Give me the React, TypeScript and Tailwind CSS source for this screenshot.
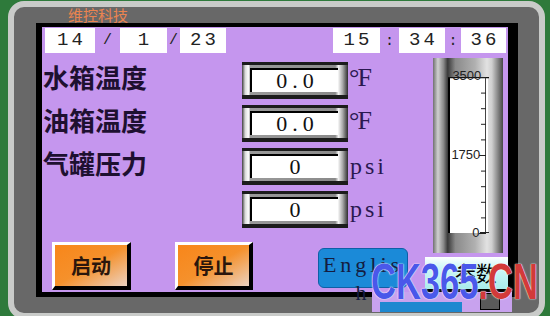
import React from "react";

function DBox({ v, w }: { v: string; w: string }) {
  return (
    <div className={`${w} h-full bg-white flex items-center justify-center pl-[3px] text-[19px] tracking-[3px] text-[#222]`}>{v}</div>
  );
}

function ValBox({ v }: { v: string }) {
  return (
    <div className="w-[106px] h-[37px] border-t-[3px] border-b-[4px] border-[#1c1c1c] bg-[linear-gradient(to_right,#3e3e3e_0%,#d8d8d8_3%,#ffffff_6%,#9a9a9a_8%,#8a8a8a_88%,#f2f2f2_91%,#a8a8a8_95%,#2e2e2e_100%)] pl-[8px] pr-[10px] pt-[3px]">
      <div className="h-[24px] bg-white border-l-2 border-t-2 border-black flex items-center justify-center pl-[5px] text-[22px] leading-none tracking-[5px] text-[#111] font-['Liberation_Serif',serif]">
        {v}
      </div>
    </div>
  );
}

function Row({ label, v, unit }: { label: string; v: string; unit: string }) {
  return (
    <div className="flex h-[37px] items-center">
      <div className="w-[200px] pl-[1px] pb-[8px] text-[26px] leading-none font-bold text-[#1e1030] font-['Noto_Sans_CJK_SC',sans-serif]">
        {label}
      </div>
      <ValBox v={v} />
      {unit === "F" ? (
        <div className="ml-[1px] pb-[6px] text-[26px] leading-none tracking-[-2px] text-[#2a1850] font-['Liberation_Serif',serif]">°F</div>
      ) : (
        <div className="ml-[2px] pb-[2px] text-[24px] leading-none tracking-[3px] text-[#2a1850] font-['Liberation_Serif',serif]">psi</div>
      )}
    </div>
  );
}

function OrangeBtn({ t, w }: { t: string; w: string }) {
  return (
    <div
      className={`${w} h-[48px] border-t-[3px] border-l-[3px] border-t-white border-l-white border-b-[4px] border-r-[4px] border-b-black border-r-black bg-[linear-gradient(150deg,#f8861a_0%,#f5912c_50%,#ecd2c0_100%)] flex items-center justify-center text-[20px] font-bold text-[#2b160c] font-['Noto_Sans_CJK_SC',sans-serif]`}
    >
      {t}
    </div>
  );
}

export default function App() {
  const ticks = Array.from({ length: 11 }, (_, i) => i * 15.6);
  return (
    <div className="relative w-[550px] h-[316px] overflow-hidden bg-[#2e7a3b] pl-[8px] pr-[5px] pt-[1px]">
      <div className="h-[318px] rounded-[16px] border-[6px] border-[#c9cbc9] bg-[#686868] pl-[22px] pr-[21px] pb-[15px] flex flex-col">
        <div className="h-[16px] pl-[32px] text-[15px] leading-[16px] text-[#eb8450] font-['Noto_Sans_CJK_SC',sans-serif]">
          维控科技
        </div>
        <div className="h-[274px] border-l-[6px] border-t-[4px] border-r-[10px] border-b-[5px] border-black bg-[#c596ee] flex flex-col">
          {/* date / time row */}
          <div className="mt-[1px] h-[25px] flex items-stretch pl-[3px] pr-[2px] font-['Liberation_Mono',monospace]">
            <DBox v="14" w="w-[50px]" />
            <div className="w-[25px] flex items-center justify-center pt-[2px] text-[15px] text-[#222]">/</div>
            <DBox v="1" w="w-[47px]" />
            <div className="w-[13px] flex items-center justify-center pt-[2px] text-[15px] text-[#222]">/</div>
            <DBox v="23" w="w-[46px]" />
            <div className="ml-auto" />
            <DBox v="15" w="w-[47px]" />
            <div className="w-[19px] flex items-center justify-center pt-[4px] text-[15px] text-[#222]">:</div>
            <DBox v="34" w="w-[46px]" />
            <div className="w-[16px] flex items-center justify-center pt-[4px] text-[15px] text-[#222]">:</div>
            <DBox v="36" w="w-[45px]" />
          </div>

          <div className="flex flex-1">
            {/* left column */}
            <div className="w-[385px] flex flex-col">
              <div className="mt-[9px] flex flex-col gap-[6px]">
                <Row label="水箱温度" v="0.0" unit="F" />
                <Row label="油箱温度" v="0.0" unit="F" />
                <Row label="气罐压力" v="0" unit="psi" />
                <Row label="" v="0" unit="psi" />
              </div>
              <div className="mt-[14px] flex items-start pl-[10px]">
                <OrangeBtn t="启动" w="w-[79px]" />
                <div className="ml-[44px]">
                  <OrangeBtn t="停止" w="w-[78px]" />
                </div>
                <div className="ml-[65px] mt-[6px] w-[90px] h-[40px] rounded-[6px] border border-[#0f5fa6] bg-[#1b8ad8] pt-[2px] text-center text-[22px] leading-[28px] tracking-[4px] text-[#141c40] font-['Liberation_Serif',serif]">
                  Englis
                  <br />h
                </div>
              </div>
            </div>

            {/* right column */}
            <div className="w-[83px] flex flex-col">
              <div className="ml-[8px] mt-[5px] w-[70px] h-[195px] bg-[linear-gradient(to_right,#707070_0%,#d0d0d0_7%,#8a8a8a_15%,#3a3a3a_21%,#8a8a8a_32%,#b0b0b0_60%,#e2e2e2_77%,#d0d0d0_84%,#8c8c8c_92%,#474747_100%)] pt-[19px] pl-[15px]">
                <div className="relative w-[40px] h-[156px] bg-white border-l-2 border-black">
                  <svg className="absolute left-[-2px] top-0" width="42" height="157" viewBox="0 0 42 157">
                    <line x1="0" y1="0.5" x2="41" y2="0.5" stroke="#111" strokeWidth="1.5" />
                    <line x1="37.5" y1="0" x2="37.5" y2="156" stroke="#444" strokeWidth="1" />
                    {ticks.map((y, i) => (
                      <line
                        key={i}
                        x1={i % 5 === 0 ? 31 : 33}
                        y1={y + 0.5}
                        x2="38"
                        y2={y + 0.5}
                        stroke="#222"
                        strokeWidth="1"
                      />
                    ))}
                    <line x1="32" y1="155.5" x2="41" y2="155.5" stroke="#222" strokeWidth="1" />
                  </svg>
                  <span className="absolute left-0 top-[-8px] w-[33px] text-center text-[13px] leading-[14px] text-[#222] font-['Liberation_Sans',sans-serif]">3500</span>
                  <span className="absolute left-0 top-[71px] w-[31px] text-center text-[13px] leading-[14px] text-[#222] font-['Liberation_Sans',sans-serif]">1750</span>
                  <span className="absolute left-[22px] top-[149px] text-[13px] leading-[14px] text-[#222] font-['Liberation_Sans',sans-serif]">0</span>
                </div>
              </div>
              <div className="mt-[4px] h-[35px] border-b-[3px] border-black bg-[linear-gradient(to_bottom,#ffffff_0%,#d0f8f8_30%,#a8ecec_100%)] flex items-center justify-center pl-[18px] text-[21px] text-black font-['Noto_Sans_CJK_SC',sans-serif]">
                参数
              </div>
            </div>
          </div>
        </div>
      </div>

      {/* overlapping pieces & watermark */}
      <div className="absolute left-[372px] top-[292px] w-[140px] h-[20px] bg-[#c8a2ee]" />
      <div className="absolute left-[380px] top-[302px] w-[82px] h-[10px] bg-[#1e88d0]" />
      <div className="absolute left-[480px] top-[293px] w-[20px] h-[17px] bg-[#5a5a5a] border border-black" />
      <div className="absolute left-[371px] top-[257px] origin-left scale-x-[0.69] whitespace-nowrap text-[50px] leading-[50px] font-bold font-['Liberation_Sans',sans-serif] [text-shadow:0_0_2px_#fff,0_0_1px_#fff]">
        <span className="text-[#4a58ea]">CK365</span>
        <span className="text-[#d23a3a]">.CN</span>
      </div>
    </div>
  );
}
